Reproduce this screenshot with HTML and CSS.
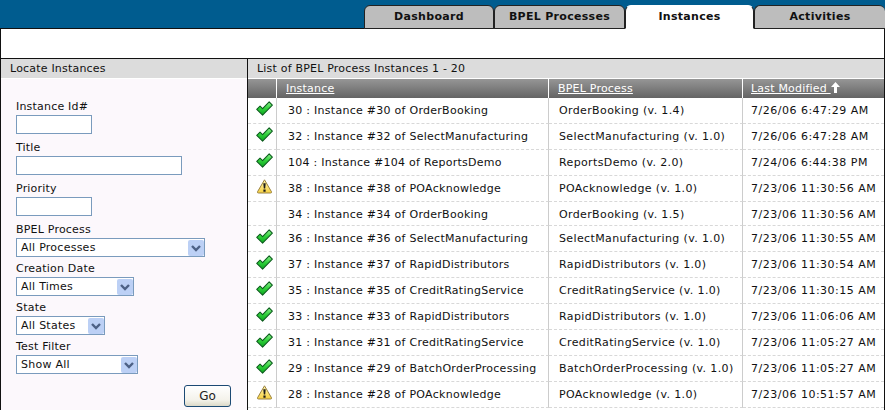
FILE: index.html
```html
<!DOCTYPE html>
<html lang="en">
<head>
<meta charset="utf-8">
<title>BPEL Console - Instances</title>
<link rel="stylesheet" href="styles.css">
</head>
<body>
<svg class="defs" width="0" height="0" aria-hidden="true">
  <defs>
    <linearGradient id="gg" x1="0" y1="0" x2="0" y2="1"><stop offset="0" stop-color="#8ff08f"/><stop offset=".5" stop-color="#2fd03a"/><stop offset="1" stop-color="#0aa51e"/></linearGradient>
    <linearGradient id="yy" x1="0" y1="0" x2="0" y2="1"><stop offset="0" stop-color="#fff6b0"/><stop offset="1" stop-color="#f6d040"/></linearGradient>
    <symbol id="ok" viewBox="0 0 16 14">
      <path d="M.7 7.800 L3.800 4.700 L6.200 7.100 L12.400 .8 L15.400 3.800 L6.200 13.200 Z" fill="url(#gg)" stroke="#0b5c1c" stroke-width="1" stroke-linejoin="round"/>
    </symbol>
    <symbol id="warn" viewBox="0 0 16 15">
      <path d="M8 .8 L15 12.800 Q15.400 14 14 14 L2 14 Q.6 14 1 12.800 Z" fill="url(#yy)" stroke="#9a8240" stroke-width="1" stroke-linejoin="round"/>
      <path d="M6.800 4.200h2.400l-.5 5.300h-1.400z M6.900 10.500h2.200v2.200h-2.200z" fill="#1a1a1a"/>
    </symbol>
  </defs>
</svg>
<div class="page">
  <header class="topbar">
    <nav class="tabs">
      <a class="tab tab-dash">Dashboard</a>
      <a class="tab tab-bpel">BPEL Processes</a>
      <a class="tab tab-inst active">Instances</a>
      <a class="tab tab-act">Activities</a>
    </nav>
  </header>
  <div class="band"></div>
  <main class="content">
    <aside class="side">
      <h2 class="bar">Locate Instances</h2>
      <form class="form">
        <label class="field"><span>Instance Id#</span><input class="in in-s" type="text"></label>
        <label class="field"><span>Title</span><input class="in in-l" type="text"></label>
        <label class="field"><span>Priority</span><input class="in in-s" type="text"></label>
        <label class="field field-sel"><span>BPEL Process</span>
          <span class="sel sel-a"><select><option>All Processes</option></select><i class="arrow"><svg width="16" height="16" viewBox="0 0 16 16"><path d="M4 6 L8 10 L12 6" fill="none" stroke="#4d6185" stroke-width="2.400"/></svg></i></span></label>
        <label class="field field-sel"><span>Creation Date</span>
          <span class="sel sel-b"><select><option>All Times</option></select><i class="arrow"><svg width="16" height="16" viewBox="0 0 16 16"><path d="M4 6 L8 10 L12 6" fill="none" stroke="#4d6185" stroke-width="2.400"/></svg></i></span></label>
        <label class="field field-sel"><span>State</span>
          <span class="sel sel-c"><select><option>All States</option></select><i class="arrow"><svg width="16" height="16" viewBox="0 0 16 16"><path d="M4 6 L8 10 L12 6" fill="none" stroke="#4d6185" stroke-width="2.400"/></svg></i></span></label>
        <label class="field field-sel"><span>Test Filter</span>
          <span class="sel sel-d"><select><option>Show All</option></select><i class="arrow"><svg width="16" height="16" viewBox="0 0 16 16"><path d="M4 6 L8 10 L12 6" fill="none" stroke="#4d6185" stroke-width="2.400"/></svg></i></span></label>
        <div class="actions"><button class="go" type="button">Go</button></div>
      </form>
    </aside>
    <section class="list">
      <h2 class="bar">List of BPEL Process Instances 1 - 20</h2>
      <table class="grid">
        <colgroup><col class="c-icon"><col class="c-inst"><col class="c-proc"><col class="c-date"></colgroup>
        <thead>
          <tr><th></th><th><a>Instance</a></th><th><a>BPEL Process</a></th><th><a>Last Modified&nbsp;</a><svg class="sort" width="9" height="11" viewBox="0 0 9 11"><path d="M4.500 0 L9 5 H6 V11 H3 V5 H0 Z" fill="#fff"/></svg></th></tr>
        </thead>
        <tbody>
          <tr><td><svg class="ic"><use href="#ok"/></svg></td><td>30 : Instance #30 of OrderBooking</td><td>OrderBooking (v. 1.4)</td><td>7/26/06 6:47:29 AM</td></tr>
          <tr><td><svg class="ic"><use href="#ok"/></svg></td><td>32 : Instance #32 of SelectManufacturing</td><td>SelectManufacturing (v. 1.0)</td><td>7/26/06 6:47:28 AM</td></tr>
          <tr><td><svg class="ic"><use href="#ok"/></svg></td><td>104 : Instance #104 of ReportsDemo</td><td>ReportsDemo (v. 2.0)</td><td>7/24/06 6:44:38 PM</td></tr>
          <tr><td><svg class="ic"><use href="#warn"/></svg></td><td>38 : Instance #38 of POAcknowledge</td><td>POAcknowledge (v. 1.0)</td><td>7/23/06 11:30:56 AM</td></tr>
          <tr class="short"><td></td><td>34 : Instance #34 of OrderBooking</td><td>OrderBooking (v. 1.5)</td><td>7/23/06 11:30:56 AM</td></tr>
          <tr><td><svg class="ic"><use href="#ok"/></svg></td><td>36 : Instance #36 of SelectManufacturing</td><td>SelectManufacturing (v. 1.0)</td><td>7/23/06 11:30:55 AM</td></tr>
          <tr><td><svg class="ic"><use href="#ok"/></svg></td><td>37 : Instance #37 of RapidDistributors</td><td>RapidDistributors (v. 1.0)</td><td>7/23/06 11:30:54 AM</td></tr>
          <tr><td><svg class="ic"><use href="#ok"/></svg></td><td>35 : Instance #35 of CreditRatingService</td><td>CreditRatingService (v. 1.0)</td><td>7/23/06 11:30:15 AM</td></tr>
          <tr><td><svg class="ic"><use href="#ok"/></svg></td><td>33 : Instance #33 of RapidDistributors</td><td>RapidDistributors (v. 1.0)</td><td>7/23/06 11:06:06 AM</td></tr>
          <tr><td><svg class="ic"><use href="#ok"/></svg></td><td>31 : Instance #31 of CreditRatingService</td><td>CreditRatingService (v. 1.0)</td><td>7/23/06 11:05:27 AM</td></tr>
          <tr><td><svg class="ic"><use href="#ok"/></svg></td><td>29 : Instance #29 of BatchOrderProcessing</td><td>BatchOrderProcessing (v. 1.0)</td><td>7/23/06 11:05:27 AM</td></tr>
          <tr><td><svg class="ic"><use href="#warn"/></svg></td><td>28 : Instance #28 of POAcknowledge</td><td>POAcknowledge (v. 1.0)</td><td>7/23/06 10:51:57 AM</td></tr>
        </tbody>
      </table>
    </section>
  </main>
</div>
</body>
</html>
```

FILE: styles.css
```css
* { box-sizing: border-box; }
html, body { margin: 0; padding: 0; height: 410px; overflow: hidden; background: #fff; }
body { font: 11px/13px "DejaVu Sans", Verdana, sans-serif; color: #111; }
.defs { position: absolute; }
.page { width: 885px; height: 410px; display: flex; flex-direction: column; overflow: hidden; }

.topbar { height: 29px; flex: none; background: #005c8f; border-bottom: 1px solid #111; padding-top: 5px; display: flex; justify-content: flex-end; }
.tabs { display: flex; height: 24px; }
.tab { display: flex; align-items: center; justify-content: center; height: 24px; background: #bdbdbd; border: 1px solid #222; border-radius: 6px 6px 0 0; font-weight: bold; font-size: 11px; color: #111; letter-spacing: .3px; padding-bottom: 2px; }
.tab-dash { width: 130px; }
.tab-bpel { width: 131px; }
.tab-inst { width: 129px; }
.tab-act { width: 131px; border-right: 0; }
.tab.active { background: #fff; border-color: #fff; border-left-color: #222; border-right-color: #222; border-top-color: #fff; }

.band { height: 29px; flex: none; background: #fff; border-left: 1px solid #111; border-right: 1px solid #111; }
.content { flex: 1; display: flex; border: 1px solid #111; border-width: 1px 1px 0; min-height: 0; }

.bar { margin: 0; height: 20px; font: normal 11px/18px "DejaVu Sans", Verdana, sans-serif; letter-spacing: .2px; background: #dcdcdc; padding: 1px 0 0 9px; border-bottom: 1px solid #fff; color: #111; }

.side { width: 247px; flex: none; background: #fcf8fc; border-right: 1px solid #111; }
.form { padding: 20px 0 0 15px; display: flex; flex-direction: column; letter-spacing: .2px; }
.field { display: flex; flex-direction: column; align-items: flex-start; height: 41px; }
.field-sel { height: 39px; }
.field > span:first-child { height: 16px; line-height: 13px; padding-top: 1px; }
.in { height: 19px; border: 1px solid #7a9bbd; background: #fff; padding: 0 3px; margin: 0; border-radius: 0; outline: 0; }
.in-s { width: 76px; }
.in-l { width: 166px; }
.sel { position: relative; display: block; height: 19px; }
.sel select { appearance: none; -webkit-appearance: none; width: 100%; height: 19px; border: 1px solid #7a9bbd; border-radius: 0; background: #fff; font: 11px "DejaVu Sans", Verdana, sans-serif; letter-spacing: .25px; color: #111; padding: 0 0 0 4px; margin: 0; }
.sel-a { width: 189px; }
.sel-b { width: 118px; }
.sel-c { width: 89px; }
.sel-d { width: 122px; }
.arrow { position: absolute; right: 1px; top: 2px; width: 16px; height: 16px; background: #bcd0f5; border-radius: 2px; display: block; pointer-events: none; }
.arrow svg { display: block; }
.actions { display: flex; justify-content: flex-end; padding: 7px 16px 0 0; }
.go { width: 47px; height: 22px; border: 1px solid #1c4a74; border-radius: 3px; background: linear-gradient(#fff, #f4f2ea 70%, #dcd8c8); font: 12px "DejaVu Sans", Verdana, sans-serif; color: #222; padding: 0; }

.list { flex: 1; min-width: 0; display: flex; flex-direction: column; }
.grid { border-collapse: separate; border-spacing: 0; table-layout: fixed; width: 636px; }
.c-icon { width: 29px; }
.c-inst { width: 272px; }
.c-proc { width: 194px; }
.c-date { width: 141px; }
.grid th { height: 19px; padding: 0 0 0 9px; text-align: left; font-weight: normal; letter-spacing: .2px; color: #fff; background: linear-gradient(#969696, #646464); border-right: 1px solid #fff; white-space: nowrap; }
.grid th:last-child { border-right: 0; padding-left: 8px; }
.grid th a { text-decoration: underline; }
.sort { vertical-align: -1px; }
.grid td { height: 26px; padding: 0 0 0 11px; border-bottom: 1px dashed #d8d8d8; border-right: 1px solid #ccc; white-space: nowrap; vertical-align: middle; background: #fff; }
.grid td:first-child { padding: 0 0 0 8px; }
.grid td:nth-child(2) { letter-spacing: .27px; }
.grid td:nth-child(3) { padding-left: 10px; letter-spacing: .37px; }
.grid td:last-child { border-right: 0; padding-left: 8px; letter-spacing: .5px; }
.grid tr.short td { height: 24px; padding-top: 1px; }
.ic { display: block; width: 17px; height: 15px; margin-top: -4px; }
```
